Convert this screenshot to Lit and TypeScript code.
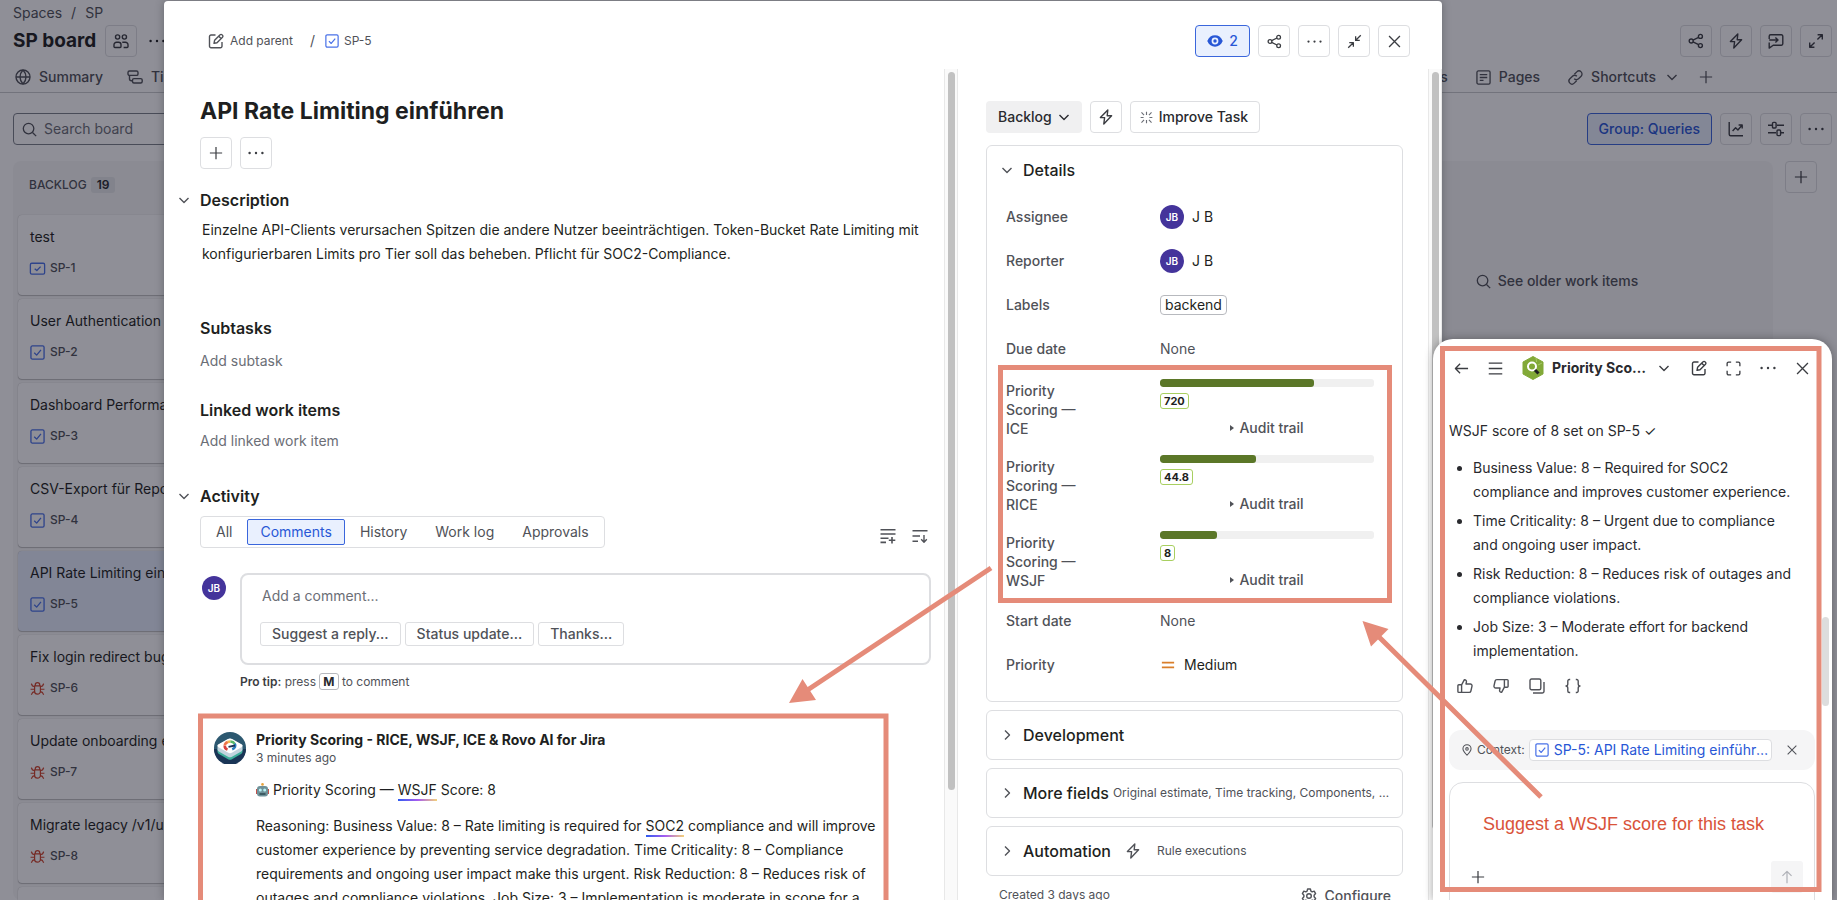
import { LitElement, html, css, svg, nothing, TemplateResult } from "lit";
import { customElement, property } from "lit/decorators.js";
import { classMap } from "lit/directives/class-map.js";

const ICONS: Record<string, TemplateResult> = {
  people: svg`<circle cx="4.6" cy="4" r="2.1"/><circle cx="11.4" cy="4" r="2.1"/><path d="M1 13.2v-1.4a2.6 2.6 0 0 1 2.6-2.6h2a2.4 2.4 0 0 1 2.4 2.4v2a.9.9 0 0 1-.9.9H2a1 1 0 0 1-1-1.3zM9.2 9.4c.4-.2.8-.2 1.2-.2h2a2.6 2.6 0 0 1 2.6 2.6v1.4a1 1 0 0 1-1 1.3h-3.4"/>`,
  dots: svg`<g fill="currentColor" stroke="none"><circle cx="1.6" cy="8" r="1.2"/><circle cx="8" cy="8" r="1.2"/><circle cx="14.4" cy="8" r="1.2"/></g>`,
  globe: svg`<circle cx="8" cy="8" r="7"/><path d="M1 8h14M8 1c-4 4.2-4 9.800 0 14M8 1c4 4.2 4 9.800 0 14"/>`,
  timeline: svg`<rect x="1" y="2" width="10" height="4.400" rx="1.500"/><rect x="5.500" y="9.600" width="9.700" height="4.400" rx="1.500"/><path d="M2.500 6.400v3.400c0 1.200.8 2 2 2h1"/>`,
  search: svg`<circle cx="7" cy="7" r="5.600"/><path d="m11.200 11.200 3.900 3.900"/>`,
  plus: svg`<path d="M8 1v14M1 8h14"/>`,
  edit: svg`<path d="M7.500 2H3a1.500 1.500 0 0 0-1.500 1.500v9.700a1.500 1.500 0 0 0 1.500 1.500h9.500a1.500 1.500 0 0 0 1.500-1.500V9M6 10.300l.6-3 5.500-5.500a1.300 1.300 0 0 1 1.900 0l.5.5a1.300 1.300 0 0 1 0 1.900L9 9.700zM10.800 3.200 13 5.500"/>`,
  task: svg`<rect x="1" y="1" width="14" height="14" rx="1.500"/><path d="m4.500 8.200 2.600 2.600 4.600-5.600"/>`,
  wide: svg`<rect x=".4" y="2.400" width="15.200" height="11.600" rx="1.500"/><path d="m5 8.200 2.300 2 4-4.200"/>`,
  bug: svg`<path stroke-width="1.300" d="M4.900 5.200h6.200V11a3.100 3.100 0 0 1-6.200 0zM5.600 5V4.200a2.400 2.400 0 0 1 4.800 0V5M4.900 8.800H.6M15.400 8.800h-4.300M4.900 6.200 2.600 5.200 1.400 2.800M11.100 6.200l2.300-1 1.200-2.400M5.200 11.400l-2.400.8-1.400 2.400M10.800 11.400l2.400.8 1.400 2.400"/>`,
  eye: svg`<path fill="currentColor" stroke="none" fill-rule="evenodd" d="M8 2.300c3.400 0 6 1.800 7.500 5.100a1.500 1.500 0 0 1 0 1.200C14 11.900 11.400 13.700 8 13.700S2 11.900.5 8.600a1.500 1.500 0 0 1 0-1.200C2 4.100 4.600 2.300 8 2.300zM8 4.600a3.400 3.400 0 1 0 0 6.800 3.400 3.400 0 0 0 0-6.800z"/><circle cx="8" cy="8" r="1.700" fill="currentColor" stroke="none"/>`,
  share: svg`<circle cx="3.200" cy="8" r="2"/><circle cx="12.400" cy="3.400" r="2"/><circle cx="12.400" cy="12.600" r="2"/><path d="m5 7.100 5.600-2.800M5 8.900l5.600 2.800"/>`,
  bolt: svg`<path d="M9.800 1 2.400 8.600h4.200L5.800 15l7.800-8.200H9.200z"/>`,
  feedback: svg`<path d="M1.200 6V3.200A1.400 1.400 0 0 1 2.600 1.800h10.800a1.400 1.400 0 0 1 1.400 1.400v7.600a1.400 1.400 0 0 1-1.400 1.400H5.200l-4 2.900V9.500M1.200 7h8.600M7.400 4.400 10 7 7.400 9.600"/>`,
  expand: svg`<path d="M9.600 1.700h4.700v4.700M14.300 1.700 9.400 6.600M6.400 14.300H1.700V9.600M1.700 14.300l4.900-4.900"/>`,
  shrink: svg`<path d="M14.700 1.300 9.600 6.400M9.200 2.400v4.400h4.400M1.300 14.700l5.100-5.100M2.400 9.200h4.400v4.400"/>`,
  close: svg`<path d="m2.200 2.200 11.600 11.600M13.800 2.200 2.200 13.800"/>`,
  page: svg`<rect x="1" y="1" width="14" height="14" rx="1.500"/><path d="M4 5h8M4 8h8M4 11h4"/>`,
  link: svg`<path d="m6.800 4.600 2.600-2.600a3.200 3.200 0 0 1 4.600 4.600l-2.800 2.800a3.200 3.200 0 0 1-4.600 0M9.200 11.400 6.600 14A3.200 3.200 0 0 1 2 9.400l2.800-2.800a3.200 3.200 0 0 1 4.600 0"/>`,
  down: svg`<path d="m3.500 6 4.500 4.500L12.500 6"/>`,
  right: svg`<path d="M6 3.500 10.500 8 6 12.500"/>`,
  chart: svg`<path d="M1.200 1v12.300a1.500 1.500 0 0 0 1.500 1.500H15M4.600 10l3-3.200 2.300 2.200L14 4.300M10.600 4h3.600v3.600"/>`,
  sliders: svg`<path d="M0 4.200h4M9 4.200h7M0 11.800h8M13 11.800h3"/><rect x="4.500" y="1.400" width="3.600" height="5.600" rx="1"/><rect x="9" y="9" width="3.600" height="5.600" rx="1"/>`,
  sparkle: svg`<path d="M8 .8v4M8 15.200v-4M.8 8h3.600M15.200 8h-3.600M1.800 1.800l3.200 3.200M14.200 1.800 11 5M1.800 14.200 5 11M14.200 14.200 11 11"/>`,
  linesPlus: svg`<path d="M.5 1.800h15M.5 6h15M.5 10.200h8M.5 14.400h5.500M12 9v6.500M8.800 12.200h6.500" stroke-width="1.600"/>`,
  sortDown: svg`<path d="M.5 2.800h15M.5 8h7.500M.5 13.200h5.500M12 7v7M9.200 11.300l2.800 2.900 2.800-2.900"/>`,
  gear: svg`<circle cx="8" cy="8" r="2.300"/><path d="m6.600 1-.5 2.100-1.300.7-2-.6L1.400 5.600 2.900 7.200v1.600l-1.500 1.600 1.400 2.400 2-.6 1.300.7.5 2.100h2.800l.5-2.100 1.300-.7 2 .6 1.400-2.400-1.500-1.600V7.200l1.500-1.600-1.400-2.400-2 .6-1.300-.7L9.400 1z"/>`,
  back: svg`<path d="M15 8H1.500M6.500 3 1.500 8l5 5"/>`,
  menu: svg`<path d="M.8 2.200h14.400M.8 8h14.400M.8 13.800h14.400"/>`,
  frame: svg`<path d="M1.200 5.500V2.700a1.500 1.500 0 0 1 1.500-1.500h2.800M10.500 1.200h2.800a1.500 1.500 0 0 1 1.500 1.500v2.800M14.800 10.500v2.800a1.500 1.500 0 0 1-1.500 1.500h-2.800M5.500 14.800H2.700a1.500 1.500 0 0 1-1.500-1.500v-2.800"/>`,
  thumbUp: svg`<path d="M4.600 6.800H1.800a.9.9 0 0 0-.9.9v5.800c0 .5.4.9.9.9h2.800zM4.600 6.800 7.400 1.700c1.500 0 2.300 1 2 2.300L9 6h4.300a1.700 1.700 0 0 1 1.700 2.100l-1.100 4.900a1.800 1.800 0 0 1-1.800 1.400H4.600"/>`,
  copy: svg`<rect x="1" y="1" width="10.800" height="10.800" rx="1.500"/><path d="M15 4v9.200a1.800 1.800 0 0 1-1.800 1.800H4"/>`,
  braces: svg`<path d="M5.200 1.500H4.300a1.500 1.500 0 0 0-1.500 1.500v2.800c0 1.200-.6 2.200-1.800 2.200 1.200 0 1.800 1 1.800 2.200V13a1.500 1.500 0 0 0 1.500 1.500h.9M10.800 1.500h.9a1.500 1.500 0 0 1 1.500 1.500v2.800c0 1.200.6 2.200 1.800 2.200-1.200 0-1.800 1-1.800 2.200V13a1.500 1.500 0 0 1-1.500 1.500h-.9"/>`,
  pin: svg`<path d="M8 15C5 12 2.600 9.600 2.600 6.400a5.400 5.400 0 0 1 10.800 0C13.400 9.600 11 12 8 15z"/><circle cx="8" cy="6.500" r="1.700"/>`,
  up: svg`<path d="M8 15V1.500M2.800 6.700 8 1.500l5.200 5.200"/>`,
  medium: svg`<path d="M1 5.200h14M1 10.800h14" stroke-width="2"/>`,
};

const icon = (name: string, size = 16, cls = "") => html`<svg
  class="ic ${cls}" width=${size} height=${size} viewBox="0 0 16 16" fill="none"
  stroke="currentColor" stroke-width="1.400" stroke-linejoin="round" aria-hidden="true">${ICONS[name]}</svg>`;

const base = css`
  :host { box-sizing: border-box; font-family: Inter, "Noto Sans", sans-serif; font-size: 14px; line-height: 20px; color: #1e1f21; }
  *, *::before { box-sizing: border-box; }
  h1, h2, h3, p, ul, dl, dd { margin: 0; padding: 0; }
  button, input, textarea { font: inherit; color: inherit; margin: 0; }
  button { display: inline-flex; align-items: center; justify-content: center; gap: 8px; padding: 0; border: 0; background: none; white-space: nowrap; }
  a { color: inherit; text-decoration: none; }
  .ic { flex: none; display: block; overflow: visible; }
  .box { height: 32px; min-width: 32px; border: 1px solid #dddee1; border-radius: 4px; color: #3b3d42; }
  .box.on { border-color: #3a66dc; background: #e9f0fe; color: #2857d6; font-weight: 500; }
  .row { display: flex; align-items: center; }
  .g8 { gap: 8px; }
  .avatar { width: 24px; height: 24px; flex: none; border-radius: 50%; background: #44349b; color: #fff; font-size: 10px; font-weight: 600; display: flex; align-items: center; justify-content: center; }
  .blue { color: #4a72e8; }
  .red { color: #d0452c; }
`;

interface Item { title: string; key: string; kind: string; }
const ITEMS: Item[] = [
  { title: "test", key: "SP-1", kind: "wide" },
  { title: "User Authentication", key: "SP-2", kind: "task" },
  { title: "Dashboard Performance", key: "SP-3", kind: "task" },
  { title: "CSV-Export für Reports", key: "SP-4", kind: "task" },
  { title: "API Rate Limiting einführen", key: "SP-5", kind: "task" },
  { title: "Fix login redirect bug", key: "SP-6", kind: "bug" },
  { title: "Update onboarding emails", key: "SP-7", kind: "bug" },
  { title: "Migrate legacy /v1/users", key: "SP-8", kind: "bug" },
  { title: "", key: "", kind: "" },
];

@customElement("board-page")
class BoardPage extends LitElement {
  static styles = [base, css`
    :host { display: flex; flex-direction: column; height: 100%; background: #fff; overflow: hidden; }
    .crumbs { padding: 3px 13px 0; color: #505258; display: flex; gap: 9px; }
    .head { display: flex; align-items: center; padding: 2px 5px 0 13px; }
    .head h1 { font-size: 19px; line-height: 24px; font-weight: 700; margin-right: 9px; }
    .more { margin-left: 12px; }
    .actions { margin-left: auto; }
    .tabs { display: flex; justify-content: space-between; padding: 5px 124px 0 15px; height: 36px; border-bottom: 1px solid #c9cacd; font-weight: 500; color: #505258; }
    .tabs .row { gap: 24px; height: 30px; }
    .tabs .right { gap: 28px; }
    .tabs .add { margin-left: -9px; }
    .tabs a { display: flex; align-items: center; gap: 8px; }
    .tools { display: flex; justify-content: space-between; padding: 20px 5px 0 13px; }
    .search { display: flex; align-items: center; gap: 7px; width: 240px; height: 32px; padding: 0 8px; border: 1px solid #7d818a; border-radius: 4px; color: #505258; }
    .search input { border: 0; outline: 0; background: none; width: 100%; padding: 0; }
    .search input::placeholder { color: #6b6e76; opacity: 1; }
    .group { padding: 0 11px; }
    .cols { display: flex; gap: 12px; padding: 16px 20px 0 13px; flex: 1; min-height: 0; }
    .col { background: #f8f8f8; border-radius: 8px; padding: 0 5px; }
    .first { width: 270px; }
    .mid { flex: 1; }
    .last { width: 432px; padding-top: 110px; display: flex; justify-content: center; align-items: flex-start; }
    .last button { color: #505258; font-weight: 500; gap: 7px; }
    .col h2 { display: flex; align-items: center; gap: 4px; height: 54px; padding: 0 11px 6px; font-size: 12px; line-height: 16px; font-weight: 500; color: #505258; }
    .count { background: #e6e8ea; border-radius: 3px; padding: 0 6px; font-weight: 600; color: #292a2e; }
    .card { display: flex; flex-direction: column; gap: 13px; height: 80px; margin-bottom: 4px; padding: 12px; background: #fff; border-radius: 4px; box-shadow: 0 1px 1px #1e1f2140, 0 0 1px #1e1f214f; white-space: nowrap; }
    .card.sel { background: #e7effd; }
    .card .row { gap: 5px; font-size: 12px; line-height: 16px; font-weight: 500; color: #505258; }
  `];
  render() {
    return html`
      <div class="crumbs"><a href="#">Spaces</a><span>/</span><a href="#">SP</a></div>
      <div class="head">
        <h1>SP board</h1>
        <button class="box" aria-label="Members">${icon("people")}</button>
        <button class="more" aria-label="More">${icon("dots")}</button>
        <div class="row g8 actions">
          ${["share", "bolt", "feedback", "expand"].map((n) => html`<button class="box" aria-label=${n}>${icon(n)}</button>`)}
        </div>
      </div>
      <nav class="tabs">
        <div class="row"><a href="#">${icon("globe")}Summary</a><a href="#">${icon("timeline")}Timeline</a></div>
        <div class="row right"><a href="#">Reports</a><a href="#">${icon("page", 15)}Pages</a>
          <a href="#">${icon("link", 15)}Shortcuts${icon("down")}</a>
          <button class="add" aria-label="Add tab">${icon("plus", 14)}</button></div>
      </nav>
      <div class="tools">
        <label class="search">${icon("search", 15)}<input placeholder="Search board" aria-label="Search board" /></label>
        <div class="row g8">
          <button class="box on group">Group: Queries</button>
          ${["chart", "sliders", "dots"].map((n) => html`<button class="box" aria-label=${n}>${icon(n)}</button>`)}
        </div>
      </div>
      <div class="cols">
        <section class="col first">
          <h2>BACKLOG <span class="count">19</span></h2>
          ${ITEMS.map((i) => html`<article class=${classMap({ card: true, sel: i.key === "SP-5" })}>
            <span>${i.title}</span>
            ${i.key ? html`<div class="row">${icon(i.kind, 15, i.kind === "bug" ? "red" : "blue")}${i.key}</div>` : nothing}
          </article>`)}
        </section>
        <section class="col mid"></section>
        <section class="col last"><button>${icon("search", 15)}See older work items</button></section>
        <button class="box" aria-label="Add column">${icon("plus", 14)}</button>
      </div>`;
  }
}

interface Score { name: string; value: string; percent: number; }
const SCORES: Score[] = [
  { name: "ICE", value: "720", percent: 72 },
  { name: "RICE", value: "44.8", percent: 44.8 },
  { name: "WSJF", value: "8", percent: 26.7 },
];

@customElement("details-panel")
class DetailsPanel extends LitElement {
  static styles = [base, css`
    :host { display: block; padding: 32px 25px 0 28px; overflow: hidden; font-weight: 400; }
    .bar { display: flex; gap: 8px; margin-bottom: 12px; font-weight: 500; }
    .status { height: 32px; padding: 0 10px 0 12px; border-radius: 4px; background: #f0f0f1; color: #292a2e; gap: 4px; }
    .improve { padding: 0 11px 0 9px; gap: 6px; color: #292a2e; }
    .improve .ic { color: #6b6e76; }
    .card { border: 1px solid #dddee1; border-radius: 6px; margin-bottom: 8px; }
    .open { padding: 0 28px 14px 19px; }
    h2 { font-size: 16px; line-height: 20px; font-weight: 500; white-space: nowrap; }
    .open .top { height: 49px; margin-left: -7px; padding-bottom: 2px; }
    .top { gap: 8px; color: #505258; display: flex; align-items: center; }
    .top h2 { color: #1e1f21; }
    .shut { height: 50px; padding: 0 12px; }
    .shut small { font-size: 12px; line-height: 16px; color: #505258; overflow: hidden; text-overflow: ellipsis; white-space: nowrap; }
    .shut .more { margin-left: -4px; }
    .shut .bolt { margin-left: 6px; margin-right: 8px; }
    .field { display: grid; grid-template-columns: 154px 1fr; align-items: center; min-height: 44px; }
    dt { font-weight: 500; color: #505258; }
    dd { display: flex; align-items: center; gap: 8px; }
    .none { color: #505258; }
    .tag { border: 1px solid #b7b9be; border-radius: 4px; padding: 0 4px; line-height: 18px; }
    .score { height: 76px; align-items: start; }
    .score dt { width: 88px; padding-top: 10px; line-height: 19px; }
    .score dd { flex-direction: column; align-items: stretch; gap: 6px; padding-top: 8px; }
    .track { height: 8px; border-radius: 3px; background: #f0f0f0; overflow: hidden; }
    .fill { height: 8px; border-radius: 3px; background: #5b7728; }
    .pill { align-self: flex-start; height: 16px; border: 1px solid #a8cf60; border-radius: 3px; padding: 0 3px; font-size: 11px; line-height: 14px; font-weight: 700; }
    .audit { font-weight: 500; color: #505258; gap: 5px; padding-top: 3px; }
    .tri { border: 3px solid transparent; border-left: 4px solid #505258; border-right: 0; }
    .medium { color: #d97f2b; margin-left: 1px; margin-right: 1px; }
    .foot { display: flex; justify-content: space-between; align-items: center; padding: 0 12px 0 13px; font-size: 12px; line-height: 16px; color: #505258; }
    .foot button { font-size: 14px; line-height: 20px; font-weight: 500; padding-top: 2px; }
  `];
  render() {
    const person = html`<span class="avatar">JB</span>J B`;
    const field = (l: string, v: unknown) => html`<div class="field"><dt>${l}</dt><dd>${v}</dd></div>`;
    const none = html`<span class="none">None</span>`;
    return html`
      <div class="bar">
        <button class="status">Backlog ${icon("down")}</button>
        <button class="box" aria-label="Automation">${icon("bolt")}</button>
        <button class="box improve">${icon("sparkle", 13)}Improve Task</button>
      </div>
      <section class="card open">
        <div class="top">${icon("down")}<h2>Details</h2></div>
        <dl>
          ${field("Assignee", person)}${field("Reporter", person)}
          ${field("Labels", html`<span class="tag">backend</span>`)}
          ${field("Due date", none)}
          ${SCORES.map((s) => html`<div class="field score"><dt>Priority Scoring — ${s.name}</dt>
            <dd><div class="track"><div class="fill" style="width:${s.percent}%"></div></div>
              <span class="pill">${s.value}</span>
              <button class="audit"><span class="tri"></span>Audit trail</button></dd></div>`)}
          ${field("Start date", none)}
          ${field("Priority", html`${icon("medium", 14, "medium")}Medium`)}
        </dl>
      </section>
      <section class="card shut top">${icon("right")}<h2>Development</h2></section>
      <section class="card shut top">${icon("right")}<h2>More fields</h2><small class="more">Original estimate, Time tracking, Components, Sprint</small></section>
      <section class="card shut top">${icon("right")}<h2>Automation</h2>${icon("bolt", 16, "bolt")}<small>Rule executions</small></section>
      <div class="foot"><span>Created 3 days ago</span><button>${icon("gear")}Configure</button></div>`;
  }
}

@customElement("issue-dialog")
class IssueDialog extends LitElement {
  static styles = [base, css`
    :host { display: flex; flex-direction: column; background: #fff; border-radius: 4px 4px 0 0; box-shadow: 0 0 8px #1e1f2159; overflow: hidden; }
    header { display: flex; align-items: center; height: 68px; padding: 12px 32px 0 44px; flex: none; font-size: 12px; color: #505258; }
    .parent { gap: 6px; }
    .slash { margin: 0 10px 0 17px; font-size: 14px; }
    .key { display: flex; align-items: center; gap: 5px; }
    .actions { margin-left: auto; font-size: 14px; }
    .watch { width: 55px; gap: 6px; }
    .body { display: flex; flex: 1; min-height: 0; }
    main { flex: 1; min-width: 0; padding: 28px 13px 0 36px; overflow: hidden; }
    details-panel { width: 470px; flex: none; }
    .rail { width: 14px; flex: none; background: #fafafa; border: solid #e8e8e8; border-width: 0 1px 0 1px; padding: 3px 2px 0 3px; }
    .thumb { height: 718px; border-radius: 4px; background: #c1c1c1; }
    .long { height: 757px; }
    h1 { font-size: 23px; line-height: 28px; font-weight: 700; }
    h2 { font-size: 16px; line-height: 24px; font-weight: 600; }
    .quick { margin: 12px 0 19px; }
    .head { display: flex; align-items: center; gap: 8px; margin-left: -24px; color: #505258; }
    .head h2 { color: #1e1f21; }
    .text { line-height: 24px; }
    .desc { margin: 6px 0 50px; padding: 0 2px; }
    .add { display: block; margin: 11px 0 27px; color: #6b6e76; }
    .last { margin: 9px 0 33px; }
    .filters { display: flex; justify-content: space-between; align-items: center; margin: 8px 3px 25px 0; }
    .seg { display: flex; align-items: center; gap: 2px; border: 1px solid #dddee1; border-radius: 4px; height: 32px; padding: 0 2px; color: #505258; }
    .seg button { height: 26px; padding: 0 12px; border: 1px solid transparent; border-radius: 2px; }
    .seg button.on { border-color: #3a66dc; background: #e9f0fe; color: #2857d6; }
    .icons { gap: 16px; padding-top: 8px; color: #505258; }
    .compose { display: flex; align-items: flex-start; gap: 14px; padding-left: 2px; }
    .compose .avatar { margin-top: 3px; }
    .grow { flex: 1; }
    .area { border: 2px solid #dddee1; border-radius: 8px; height: 92px; padding: 11px 18px; }
    .area input { display: block; width: 100%; border: 0; outline: 0; padding: 0 2px; height: 20px; margin-bottom: 16px; }
    .area input::placeholder { color: #6b6e76; opacity: 1; }
    .replies { display: flex; gap: 4px; }
    .replies button { height: 24px; padding: 0 11px; border: 1px solid #dddee1; border-radius: 3px; font-weight: 500; color: #505258; }
    .tip { margin-top: 9px; font-size: 12px; line-height: 16px; color: #505258; }
    .tip b { font-weight: 600; color: #3b3d42; }
    kbd { font: inherit; font-weight: 700; color: #292a2e; border: 1px solid #b7b9be; border-radius: 3px; padding: 0 3px; }
    .comment { display: flex; gap: 10px; margin-top: 40px; padding-left: 14px; }
    .logo { margin-top: 2px; flex: none; }
    .comment h3 { font-size: 14px; line-height: 20px; font-weight: 700; }
    .comment time { display: block; font-size: 12px; line-height: 16px; color: #505258; margin-bottom: 12px; }
    .content { width: 624px; }
    .comment p { margin-bottom: 12px; line-height: 24px; }
    .robot { display: inline-block; vertical-align: -2px; margin-right: 4px; }
    .term { padding-bottom: 3px; background: linear-gradient(90deg, #2e5bf0, #a65cf0 50%, #f3d27a) bottom / 100% 2px no-repeat; }
  `];
  render() {
    const acts = ["share", "dots", "shrink", "close"];
    return html`
      <header>
        <button class="parent">${icon("edit")}Add parent</button><span class="slash">/</span>
        <a class="key" href="#">${icon("task", 14, "blue")}SP-5</a>
        <div class="row g8 actions">
          <button class="box on watch">${icon("eye")}2</button>
          ${acts.map((n) => html`<button class="box" aria-label=${n}>${icon(n, 15)}</button>`)}
        </div>
      </header>
      <div class="body">
        <main>
          <h1>API Rate Limiting einführen</h1>
          <div class="row g8 quick"><button class="box" aria-label="Add">${icon("plus", 14)}</button><button class="box" aria-label="More">${icon("dots")}</button></div>
          <div class="head">${icon("down")}<h2>Description</h2></div>
          <p class="text desc">Einzelne API-Clients verursachen Spitzen die andere Nutzer beeinträchtigen. Token-Bucket Rate Limiting mit konfigurierbaren Limits pro Tier soll das beheben. Pflicht für SOC2-Compliance.</p>
          <h2>Subtasks</h2><button class="add">Add subtask</button>
          <h2>Linked work items</h2><button class="add last">Add linked work item</button>
          <div class="head">${icon("down")}<h2>Activity</h2></div>
          <div class="filters">
            <div class="seg">${["All", "Comments", "History", "Work log", "Approvals"].map((t) => html`<button class=${classMap({ on: t === "Comments" })}>${t}</button>`)}</div>
            <div class="row icons"><button aria-label="Summarize">${icon("linesPlus")}</button><button aria-label="Sort">${icon("sortDown")}</button></div>
          </div>
          <div class="compose"><span class="avatar">JB</span>
            <div class="grow"><div class="area">
              <input placeholder="Add a comment..." aria-label="Add a comment" />
              <div class="replies"><button>Suggest a reply...</button><button>Status update...</button><button>Thanks...</button></div></div>
              <p class="tip"><b>Pro tip:</b> press <kbd>M</kbd> to comment</p></div>
          </div>
          <article class="comment">
            <svg class="logo" width="32" height="32" viewBox="0 0 32 32" aria-hidden="true">
              <circle cx="16" cy="16" r="16" fill="#2c5870"/><path d="M0 17a16 16 0 0 0 32 0z" fill="#1a3556"/>
              <path d="M3.500 17 16 10l12.500 7v2.500Q28.500 21 27 22l-9 5.300q-2 1-4 0L5 22q-1.500-1-1.500-2.500z" fill="#3fae9b"/>
              <path d="M3.500 13 16 6.500 28.500 13v4.500q0 1.200-1.300 2L18 24.800q-2 1-4 0l-9.200-5.300q-1.300-.8-1.300-2z" fill="#c3d3de"/>
              <path d="M4.600 12.300 13.800 7q2.200-1.200 4.400 0l9.200 5.300q2 1.500 0 3L18.200 20.600q-2.200 1.200-4.400 0l-9.200-5.300q-2-1.500 0-3z" fill="#fff"/>
              <g fill="none" stroke-width="2.600"><path d="M13.500 17.600a5.200 4 0 0 1-2.700-4" stroke="#d8403c"/><path d="M10.800 13.600a5.200 4 0 0 1 3-3.600" stroke="#ee7448"/><path d="M13.800 10a5.200 4 0 0 1 2.600-.5" stroke="#f0b64a"/><path d="M16.400 9.500a5.200 4 0 0 1 4.300 2.300" stroke="#57b96a"/><path d="M20.700 11.800a5.200 4 0 0 1-2.500 5.500" stroke="#2b7fc0"/></g>
              <path d="m14.500 14.800 6.500-1.300" stroke="#1d3557" stroke-width="1.800"/>
            </svg>
            <div class="content">
              <h3>Priority Scoring - RICE, WSJF, ICE &amp; Rovo AI for Jira</h3><time>3 minutes ago</time>
              <p><svg class="robot" width="13" height="14" viewBox="0 0 13 14" aria-hidden="true"><circle cx="6.500" cy="1.400" r="1.300" fill="#e8a33c"/><path d="M0 6h13v5H0z" fill="#c0504a"/><rect x="1" y="3" width="11" height="10.500" rx="3" fill="#6f9199"/><circle cx="4.300" cy="7" r="1.500" fill="#b9f2f5"/><circle cx="8.700" cy="7" r="1.500" fill="#b9f2f5"/><path d="M3.500 11h6" stroke="#2d4a52" stroke-width="1.500"/></svg>Priority Scoring — <span class="term">WSJF</span> Score: 8</p>
              <p>Reasoning: Business Value: 8 – Rate limiting is required for <span class="term">SOC2</span> compliance and will improve customer experience by preventing service degradation. Time Criticality: 8 – Compliance requirements and ongoing user impact make this urgent. Risk Reduction: 8 – Reduces risk of outages and compliance violations. Job Size: 3 – Implementation is moderate in scope for a</p>
            </div>
          </article>
        </main>
        <div class="rail"><div class="thumb"></div></div>
        <details-panel></details-panel>
        <div class="rail"><div class="thumb long"></div></div>
      </div>`;
  }
}

const POINTS = [
  "Business Value: 8 – Required for SOC2 compliance and improves customer experience.",
  "Time Criticality: 8 – Urgent due to compliance and ongoing user impact.",
  "Risk Reduction: 8 – Reduces risk of outages and compliance violations.",
  "Job Size: 3 – Moderate effort for backend implementation.",
];

@customElement("chat-panel")
class ChatPanel extends LitElement {
  @property() issue = "SP-5";
  static styles = [base, css`
    :host { display: flex; flex-direction: column; background: #fff; border-radius: 20px 20px 0 0; box-shadow: 0 0 8px #1e1f2166; padding: 0 17px 0 16px; overflow: hidden; color: #292a2e; }
    header { display: flex; align-items: center; justify-content: space-between; height: 58px; padding: 0 5px; color: #3b3d42; flex: none; }
    .agent { display: flex; align-items: center; gap: 8px; width: 150px; }
    .agent h2 { flex: 1; font-size: 14px; line-height: 20px; font-weight: 700; color: #292a2e; overflow: hidden; text-overflow: ellipsis; white-space: nowrap; }
    .answer { padding: 22px 20px 0 0; line-height: 24px; }
    ul { margin-top: 13px; padding-left: 24px; display: flex; flex-direction: column; gap: 5px; }
    .react { display: flex; gap: 20px; padding: 15px 8px 0; color: #505258; }
    .flip { transform: scale(-1, -1); }
    .context { display: flex; align-items: center; height: 40px; margin-top: 36px; padding: 0 17px 0 12px; background: #f5f5f6; border-radius: 12px; font-size: 12px; color: #505258; gap: 4px; flex: none; }
    .chip { display: flex; align-items: center; gap: 5px; min-width: 0; flex: 1; height: 22px; margin-right: 10px; padding: 0 2px 0 5px; border: 1px solid #dddee1; border-radius: 4px; background: #fff; font-size: 14px; color: #2857d6; }
    .chip span { overflow: hidden; text-overflow: ellipsis; white-space: nowrap; }
    .compose { flex: none; margin: 12px 0 -8px; height: 136px; border: 1px solid #dddee1; border-radius: 14px; padding: 29px 11px 0 20px; }
    .compose input { display: block; width: 100%; height: 24px; border: 0; outline: 0; padding: 0 13px; font-family: "Liberation Sans", Arial, sans-serif; font-size: 18px; line-height: 24px; color: #d9533a; background: none; }
    .foot { display: flex; justify-content: space-between; align-items: center; margin-top: 25px; color: #3b3d42; padding-left: 1px; }
    .send { width: 32px; height: 32px; background: #f5f5f6; border-radius: 3px; color: #b0b2b8; }
    .thumb { position: absolute; right: 3px; top: 278px; width: 7px; height: 89px; border-radius: 4px; background: #dddddd; }
  `];
  render() {
    return html`
      <header>
        <button aria-label="Back">${icon("back", 15)}</button><button aria-label="Chats">${icon("menu", 15)}</button>
        <div class="agent"><svg width="22" height="24" viewBox="0 0 22 24" aria-hidden="true"><path d="M11 .5 21 6v12l-10 5.500L1 18V6z" fill="#82a938" stroke="#82a938" stroke-linejoin="round"/><path d="m14 2 .6 4M20 7l-4 2" stroke="#a6c866"/><circle cx="10" cy="10.500" r="4" fill="none" stroke="#fff" stroke-width="2"/><path d="m13 14 3.500 3.500" stroke="#1e1f21" stroke-width="3"/></svg>
          <h2>Priority Scoring</h2>${icon("down", 16)}</div>
        <button aria-label="New chat">${icon("edit")}</button><button aria-label="Full screen">${icon("frame", 15)}</button>
        <button aria-label="More">${icon("dots")}</button><button aria-label="Close">${icon("close", 15)}</button>
      </header>
      <div class="answer"><p>WSJF score of 8 set on ${this.issue} ✓</p>
        <ul>${POINTS.map((p) => html`<li>${p}</li>`)}</ul></div>
      <div class="react"><button aria-label="Helpful">${icon("thumbUp")}</button><button aria-label="Not helpful">${icon("thumbUp", 16, "flip")}</button>
        <button aria-label="Copy">${icon("copy")}</button><button aria-label="Debug">${icon("braces")}</button></div>
      <div class="context">${icon("pin", 12)}Context:
        <a class="chip" href="#">${icon("task", 14, "blue")}<span>${this.issue}: API Rate Limiting einführen</span></a>
        <button aria-label="Remove context">${icon("close", 12)}</button></div>
      <div class="compose"><input aria-label="Message" .value=${"Suggest a WSJF score for this task"} />
        <div class="foot"><button aria-label="Attach">${icon("plus", 14)}</button><button class="send" aria-label="Send">${icon("up", 14)}</button></div></div>
      <div class="thumb"></div>`;
  }
}

@customElement("app-root")
class AppRoot extends LitElement {
  static styles = css`
    :host { display: block; position: relative; height: 100vh; overflow: hidden; }
    .blanket { position: absolute; inset: 0; background: rgba(15, 14, 32, 0.465); }
    .dialog { position: absolute; inset: 1px 395px 0 164px; }
    .chat { position: absolute; top: 339px; right: 5px; bottom: 0; width: 399px; }
    .marks { position: absolute; top: 0; left: 0; pointer-events: none; }
  `;
  render() {
    return html`
      <board-page></board-page>
      <div class="blanket"></div>
      <issue-dialog class="dialog"></issue-dialog>
      <chat-panel class="chat"></chat-panel>
      <svg class="marks" width="1837" height="900" aria-hidden="true">
        <g fill="none" stroke="#e58b79" stroke-width="5">
          <rect x="200.500" y="716" width="685.500" height="220"/>
          <rect x="1000.500" y="367.500" width="389" height="233"/>
          <rect x="1442.500" y="348.500" width="376.500" height="541"/>
          <path d="M991 568 806 691M1541 797 1378 636"/>
        </g>
        <g fill="#e58b79"><path d="m789 703 13.500-24 13.500 21zM1362.500 621l26 8-17.500 17.500z"/></g>
      </svg>`;
  }
}
